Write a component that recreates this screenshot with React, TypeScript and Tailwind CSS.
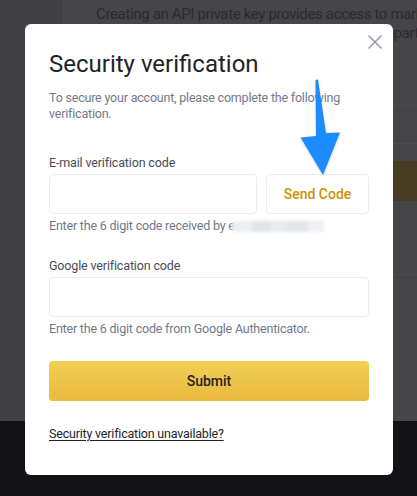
import { X } from "lucide-react";

const font = { fontFamily: "Roboto, 'Noto Sans', sans-serif" };

function Field({ label, helper, children }: { label: string; helper: React.ReactNode; children: React.ReactNode }) {
  return (
    <div className="flex flex-col">
      <label className="h-5 text-[12.5px] tracking-[-0.15px] leading-5 text-[#474d57] mb-px">{label}</label>
      {children}
      <p className="mt-1 text-[12.5px] tracking-[-0.2px] leading-4 text-[#707a8a]">{helper}</p>
    </div>
  );
}

export default function App() {
  return (
    <div className="relative w-[417px] h-[496px] overflow-hidden bg-[#46454a]" style={font}>
      {/* page behind the dialog */}
      <div className="flex flex-col h-full">
        <div className="flex h-[421px]">
          <div className="w-[64px] shrink-0 bg-[#414045] border-r border-[#4a494e]" />
          <div className="flex-1 flex flex-col">
            <div className="pl-[32px] pt-[5px] text-[15px] tracking-[-0.35px] leading-[19px] text-[#2b2a2f] whitespace-nowrap">
              <div>Creating an API private key provides access to markets</div>
              <div className="pl-[243px]">external-party site.</div>
            </div>
            <div className="h-[63px] border-b border-[#4d4c51]" />
            <div className="h-[38px] border-b border-[#4d4c51]" />
            <div className="h-[17px]" />
            <div className="h-[40px] bg-[#463b21]" />
            <div className="h-[74px] border-b border-[#4d4c51]" />
          </div>
        </div>
        <div className="flex-1 bg-[#131217]" />
      </div>

      {/* dialog */}
      <div className="absolute left-[25px] top-[24px] w-[368px] h-[451px] bg-white rounded-[6px] px-6 pt-6">
        <button className="absolute right-[6px] top-[6px] text-[#929aa5]">
          <X size={24} strokeWidth={1.5} />
        </button>
        <h2 className="text-[24px] leading-8 text-[#1e2329]">Security verification</h2>
        <p className="mt-[10px] text-[12.5px] tracking-[-0.2px] leading-4 text-[#707a8a]">
          To secure your account, please complete the following verification.
        </p>

        <div className="mt-[31px]">
          <Field
            label="E-mail verification code"
            helper={
              <span className="flex items-center">
                Enter the 6 digit code received by e
                <span className="inline-flex h-[11px] blur-[1.5px] ml-[-3px]">
                  <span className="w-[20px] bg-[#eceef1]" />
                  <span className="w-[18px] bg-[#e2e4e8]" />
                  <span className="w-[16px] bg-[#eaebee]" />
                  <span className="w-[22px] bg-[#e4e6ea]" />
                  <span className="w-[16px] bg-[#eef0f2]" />
                </span>
              </span>
            }
          >
            <div className="flex gap-[9px]">
              <input className="flex-1 h-[40px] rounded-[4px] border border-[#eaecef] outline-none" />
              <button className="w-[103px] h-[40px] rounded-[4px] border border-[#eaecef] text-[14px] font-medium text-[#c99400]">
                Send Code
              </button>
            </div>
          </Field>
        </div>

        <div className="mt-[22px]">
          <Field label="Google verification code" helper="Enter the 6 digit code from Google Authenticator.">
            <input className="w-full h-[40px] rounded-[4px] border border-[#eaecef] outline-none" />
          </Field>
        </div>

        <button className="mt-6 w-full h-[40px] rounded-[4px] bg-gradient-to-b from-[#f1cf56] to-[#e9ba3d] text-[14px] font-medium text-[#1e2329]">
          Submit
        </button>

        <a className="block mt-[23px] text-[12.5px] tracking-[-0.2px] leading-5 text-[#1e2329] underline underline-offset-2">
          Security verification unavailable?
        </a>
      </div>

      {/* annotation arrow */}
      <svg className="absolute inset-0 pointer-events-none" width="417" height="496" viewBox="0 0 417 496">
        <defs>
          <filter id="sh" x="-20%" y="-20%" width="140%" height="140%">
            <feDropShadow dx="0" dy="1" stdDeviation="1" floodColor="#000" floodOpacity="0.2" />
          </filter>
        </defs>
        <path
          d="M315.5 80 L318 79.5 L326 133 L340 132.5 L323 175 L300.5 137.5 L316 136 Z"
          fill="#1a8cff"
          filter="url(#sh)"
        />
      </svg>
    </div>
  );
}
